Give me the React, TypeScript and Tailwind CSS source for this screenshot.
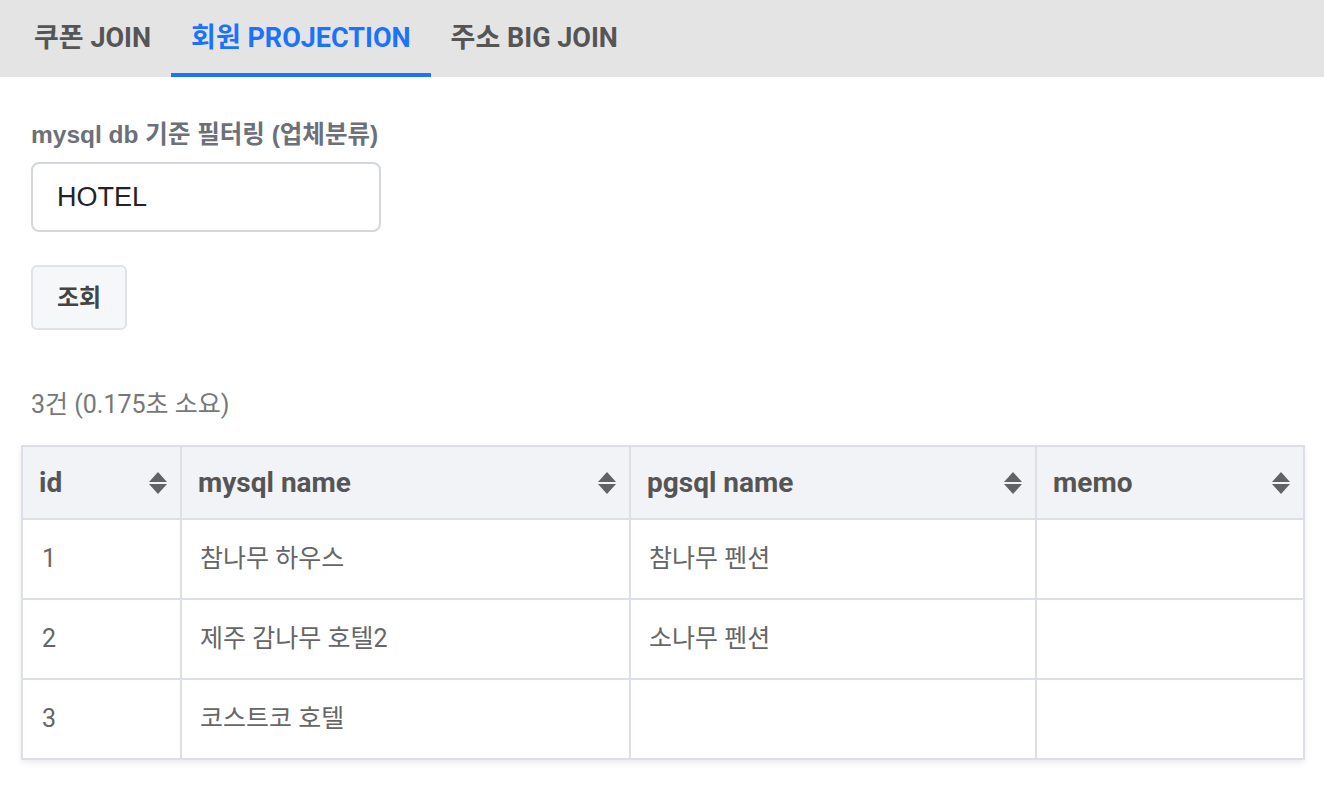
import React from "react"

const font = { fontFamily: "Roboto, 'Noto Sans CJK KR', sans-serif" }

const tabs = ["쿠폰 JOIN", "회원 PROJECTION", "주소 BIG JOIN"]

const rows = [
  { id: 1, mysql: "참나무 하우스", pgsql: "참나무 펜션", memo: "" },
  { id: 2, mysql: "제주 감나무 호텔2", pgsql: "소나무 펜션", memo: "" },
  { id: 3, mysql: "코스트코 호텔", pgsql: "", memo: "" },
]

const columns = [
  { key: "id", label: "id", width: "w-[159px]" },
  { key: "mysql", label: "mysql name", width: "w-[449px]" },
  { key: "pgsql", label: "pgsql name", width: "w-[406px]" },
  { key: "memo", label: "memo", width: "w-[268px]" },
]

const SortIcon = () => (
  <svg width="20" height="24" viewBox="0 0 20 24" className="shrink-0 text-[#5f6266]">
    <path d="M10 1 L19 11 L1 11 Z" fill="currentColor" />
    <path d="M1 13 L19 13 L10 23 Z" fill="currentColor" />
  </svg>
)

export default function App() {
  const active = 1

  return (
    <div className="min-h-screen bg-white" style={font}>
      <div className="flex h-[77px] bg-[#e4e4e4] pl-[14px]">
        {tabs.map((t, i) => (
          <div
            key={t}
            className={
              i === active
                ? "flex items-center px-5 pt-[3px] text-[27px] font-bold text-[#1a73f8] border-b-4 border-[#1a73f8]"
                : "flex items-center px-5 pt-[3px] text-[27px] font-bold text-[#555555] border-b-4 border-transparent"
            }
          >
            {t}
          </div>
        ))}
      </div>

      <div className="px-[31px] pt-[44px]">
        <div
          className="text-[24.5px] font-bold text-[#6b7079] leading-[28px]"
          style={{ fontFamily: "'Liberation Sans', 'Noto Sans CJK KR', sans-serif" }}
        >
          mysql db 기준 필터링 (업체분류)
        </div>
        <div className="mt-[13px] flex h-[70px] w-[350px] items-center rounded-lg border-2 border-[#d3d6db] px-[24px] text-[27px] text-[#222222]">
          <span style={{ fontFamily: "'Liberation Sans', sans-serif" }}>HOTEL</span>
        </div>
        <button className="mt-[33px] flex h-[65px] w-[96px] items-center justify-center rounded-md border-2 border-[#e0e2e6] bg-[#f6f7f9] text-[24px] font-bold text-[#444444]">
          조회
        </button>
        <div className="mt-[60px] text-[25px] text-[#777777] leading-[30px]">3건 (0.175초 소요)</div>
      </div>

      <div className="px-[21px] pt-[25px]">
        <table className="w-[1282px] table-fixed border-collapse border-2 border-[#dcdfe6] shadow-[0_3px_6px_rgba(0,0,0,0.08)]">
          <thead>
            <tr className="h-[73px] bg-[#f1f3f7]">
              {columns.map((c) => (
                <th key={c.key} className={`${c.width} border-2 border-[#dcdfe6] pl-[16px] pr-[12px] text-left`}>
                  <div className="flex items-center justify-between text-[28px] font-bold text-[#555555]">
                    <span>{c.label}</span>
                    <SortIcon />
                  </div>
                </th>
              ))}
            </tr>
          </thead>
          <tbody>
            {rows.map((r) => (
              <tr key={r.id} className="h-[80px]">
                <td className="border-2 border-[#dcdfe6] pl-[19px] text-[25px] text-[#666666]">{r.id}</td>
                <td className="border-2 border-[#dcdfe6] pl-[18px] text-[25px] text-[#666666]">{r.mysql}</td>
                <td className="border-2 border-[#dcdfe6] pl-[18px] text-[25px] text-[#666666]">{r.pgsql}</td>
                <td className="border-2 border-[#dcdfe6] pl-[18px] text-[25px] text-[#666666]">{r.memo}</td>
              </tr>
            ))}
          </tbody>
        </table>
      </div>
    </div>
  )
}
